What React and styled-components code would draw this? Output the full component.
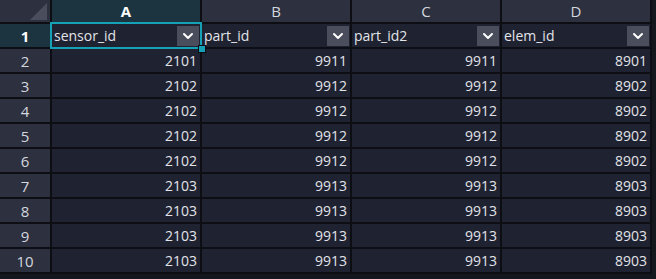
import React from 'react'
import styled, { createGlobalStyle } from "styled-components";

const GlobalStyle = createGlobalStyle`
  html, body {
    margin: 0;
    padding: 0;
    background: #15171e;
  }
  body {
    font-family: "Open Sans", "Noto Sans", "Liberation Sans", sans-serif;
  }
`;

const columns = ["A", "B", "C", "D"];
const fields = ["sensor_id", "part_id", "part_id2", "elem_id"];
const rows = [
  [2101, 9911, 9911, 8901],
  [2102, 9912, 9912, 8902],
  [2102, 9912, 9912, 8902],
  [2102, 9912, 9912, 8902],
  [2102, 9912, 9912, 8902],
  [2103, 9913, 9913, 8903],
  [2103, 9913, 9913, 8903],
  [2103, 9913, 9913, 8903],
  [2103, 9913, 9913, 8903],
];

const Chevron = () => (
  <svg width="12" height="8" viewBox="0 0 12 8">
    <path d="M2 2 L6 6 L10 2" fill="none" stroke="#ffffff" strokeWidth="2" strokeLinecap="round" strokeLinejoin="round" />
  </svg>
);

const Sheet = () => (
  <Grid>
    <Corner>
      <svg width="50" height="22" viewBox="0 0 50 22">
        <polygon points="47,3 47,20 30,20" fill="#4a4d5c" />
      </svg>
    </Corner>
    {columns.map((c, i) => (
      <ColHeader key={c} $active={i === 0}>{c}</ColHeader>
    ))}

    <RowHeader $active>1</RowHeader>
    {fields.map((f, i) => (
      <FieldCell key={f} $selected={i === 0}>
        <span>{f}</span>
        <DropButton><Chevron /></DropButton>
        {i === 0 && <Handle />}
      </FieldCell>
    ))}

    {rows.map((r, ri) => (
      <React.Fragment key={ri}>
        <RowHeader>{ri + 2}</RowHeader>
        {r.map((v, ci) => (
          <NumCell key={ci}>{v}</NumCell>
        ))}
      </React.Fragment>
    ))}
  </Grid>
);

export default function App() {
  return (
    <>
      <GlobalStyle />
      <Page>
        <Sheet />
      </Page>
    </>
  );
}

const Page = styled.div`
  width: 656px;
  height: 279px;
  background: #15171e;
  overflow: hidden;
`;

const Grid = styled.div`
  display: grid;
  grid-template-columns: 50px 148px 148px 148px 148px;
  grid-template-rows: 22px repeat(10, 23px);
  gap: 2px;
  width: max-content;
  background: #0d0e13;
  padding-right: 2px;
  padding-bottom: 2px;
`;

const Corner = styled.div`
  background: #2d303e;
  display: flex;
`;

const ColHeader = styled.div`
  background: ${p => (p.$active ? "#1b3440" : "#2d303e")};
  color: ${p => (p.$active ? "#ffffff" : "#d4d7de")};
  font-weight: ${p => (p.$active ? 700 : 400)};
  font-size: 15px;
  display: flex;
  align-items: center;
  justify-content: center;
`;

const RowHeader = styled.div`
  background: ${p => (p.$active ? "#1b3440" : "#2d303e")};
  color: ${p => (p.$active ? "#ffffff" : "#d4d7de")};
  font-weight: ${p => (p.$active ? 700 : 400)};
  font-size: 15px;
  display: flex;
  align-items: center;
  justify-content: center;
`;

const FieldCell = styled.div`
  position: relative;
  background: #1f2230;
  color: #e2e4ea;
  font-size: 14px;
  display: flex;
  align-items: center;
  justify-content: space-between;
  padding: 0 1px 0 2px;
  ${p => p.$selected && `
    outline: 2px solid #16a2b6;
    outline-offset: 0px;
    z-index: 1;
  `}
`;

const DropButton = styled.div`
  width: 22px;
  height: 20px;
  background: #4a4d5c;
  display: flex;
  align-items: center;
  justify-content: center;
`;

const Handle = styled.div`
  position: absolute;
  right: -6px;
  bottom: -6px;
  width: 6px;
  height: 6px;
  background: #16a2b6;
  border: 1px solid #0d0e13;
`;

const NumCell = styled.div`
  background: #1f2230;
  color: #e2e4ea;
  font-size: 14px;
  display: flex;
  align-items: center;
  justify-content: flex-end;
  padding-right: 3px;
`;
